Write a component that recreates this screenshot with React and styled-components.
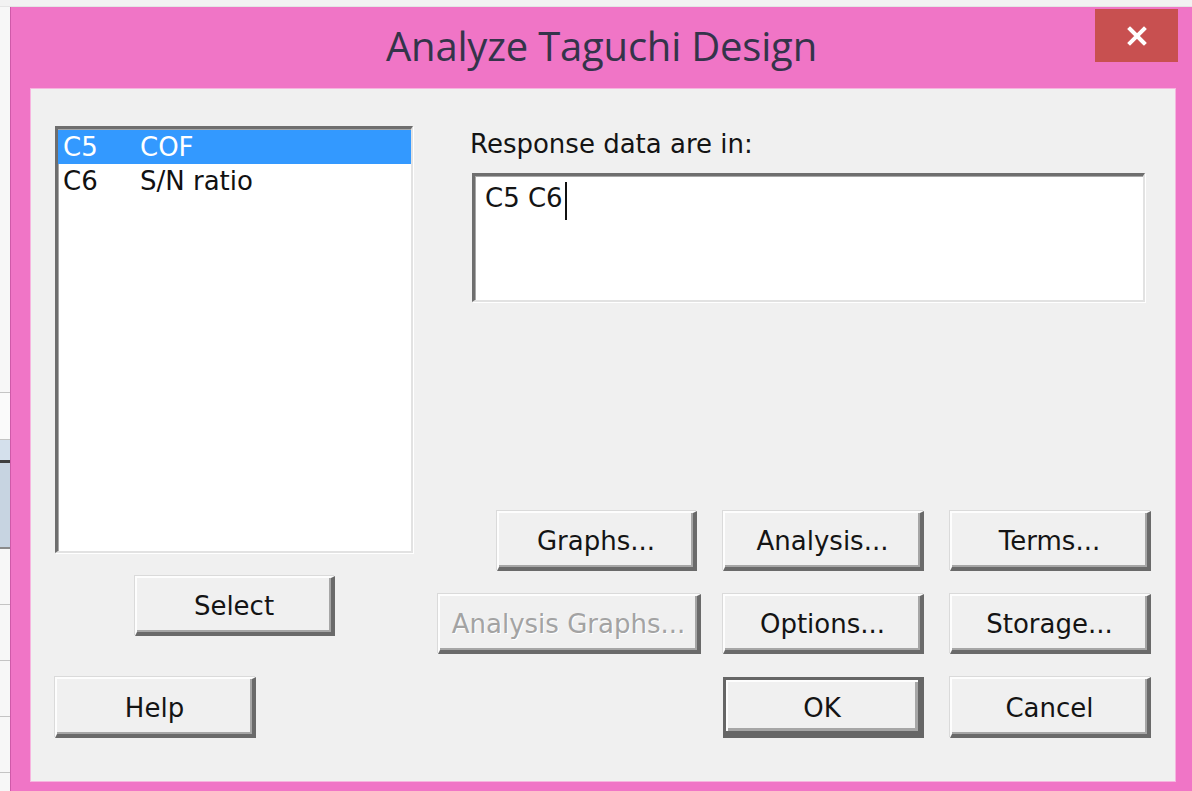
import React from "react";
import styled, { createGlobalStyle, css } from "styled-components";

const GlobalStyle = createGlobalStyle`
  html, body {
    margin: 0;
    padding: 0;
    background: #f4f4f4;
    overflow: hidden;
  }
  * {
    box-sizing: border-box;
  }
`;

const uiFont = `"DejaVu Sans", "Liberation Sans", sans-serif`;

const Desktop = styled.div`
  display: flex;
  flex-direction: column;
  width: 1192px;
  height: 791px;
`;

const TopBand = styled.div`
  height: 7px;
  background: #f2f2f2;
  border-bottom: 1px solid #e4e4e4;
`;

const Stage = styled.div`
  display: flex;
  flex: 1;
  min-height: 0;
`;

// strip of the worksheet showing behind the dialog
const SheetEdge = styled.div`
  width: 10px;
  display: flex;
  flex-direction: column;
  background: #f7f7f7;
`;

const SheetCell = styled.div`
  height: ${(p) => p.$h}px;
  flex: none;
  background: ${(p) => p.$bg || "#f7f7f7"};
  border-bottom: ${(p) => p.$line || "1px solid #c4c4c4"};
`;

const Window = styled.div`
  flex: 1;
  display: flex;
  flex-direction: column;
  background: #f075c6;
  border-left: 1px solid #cf5aa9;
`;

const TitleBar = styled.div`
  position: relative;
  height: 81px;
  flex: none;
  display: flex;
  align-items: center;
  justify-content: center;
`;

const Title = styled.h1`
  margin: 0 0 4px 0;
  font-family: "Open Sans", "Noto Sans", sans-serif;
  font-weight: 400;
  font-size: 40px;
  color: #34344a;
  letter-spacing: -0.2px;
`;

const CloseButton = styled.div`
  position: absolute;
  top: 2px;
  right: 14px;
  width: 83px;
  height: 53px;
  background: #c85050;
  display: flex;
  align-items: center;
  justify-content: center;
`;

const Frame = styled.div`
  flex: 1;
  display: flex;
  padding: 0 16px 9px 19px;
  min-height: 0;
`;

const Client = styled.div`
  flex: 1;
  display: flex;
  background: #f0f0f0;
  border: 1px solid #f7b4df;
  padding: 37px 24px 43px 24px;
`;

const LeftColumn = styled.div`
  width: 358px;
  display: flex;
  flex-direction: column;
  align-items: flex-start;
`;

const RightColumn = styled.div`
  flex: 1;
  display: flex;
  flex-direction: column;
  margin-left: 26px;
`;

const sunken = css`
  background: #ffffff;
  border-style: solid;
  border-color: #6e6e6e #e2e2e2 #e2e2e2 #6e6e6e;
  border-width: 3px 2px 2px 3px;
  box-shadow: inset 1px 1px 0 #a8a8a8, 1px 1px 0 #ffffff;
`;

const ListBox = styled.div`
  ${sunken};
  width: 358px;
  height: 427px;
  padding-top: 1px;
  font-family: ${uiFont};
  font-size: 26px;
`;

const ListRow = styled.div`
  display: flex;
  height: 34px;
  align-items: center;
  padding-left: 5px;
  background: ${(p) => (p.$selected ? "#3399ff" : "transparent")};
  color: ${(p) => (p.$selected ? "#ffffff" : "#111111")};
`;

const ColName = styled.span`
  width: 77px;
  flex: none;
`;

const Button = styled.div`
  width: ${(p) => p.$w || 200}px;
  height: ${(p) => p.$h || 60}px;
  flex: none;
  display: flex;
  align-items: center;
  justify-content: center;
  background: #f0f0f0;
  font-family: ${uiFont};
  font-size: 26px;
  color: ${(p) => (p.$disabled ? "#a3a3a3" : "#141414")};
  text-shadow: ${(p) => (p.$disabled ? "1px 1px 0 #ffffff" : "none")};
  border-style: solid;
  border-color: #fdfdfd #6a6a6a #6a6a6a #fdfdfd;
  border-width: 2px 4px 4px 2px;
  box-shadow: inset -2px -2px 0 #a6a6a6, -1px -1px 0 #dadada;
  padding-top: 2px;

  ${(p) =>
    p.$default &&
    css`
      border-color: #666666;
      border-width: 3px 6px 7px 3px;
      box-shadow: inset 2px 2px 0 #fdfdfd, inset -3px -3px 0 #a6a6a6;
      padding-top: 4px;
    `}
`;

const SelectButton = styled(Button)`
  margin: 23px 0 0 80px;
`;

const HelpButton = styled(Button)`
  margin-top: 41px;
`;

const FieldLabel = styled.div`
  height: 47px;
  padding: 3px 0 0 31px;
  font-family: ${uiFont};
  font-size: 26px;
  color: #141414;
`;

const ResponseBox = styled.div`
  ${sunken};
  margin-left: 33px;
  width: 673px;
  height: 129px;
  padding: 7px 0 0 10px;
  font-family: ${uiFont};
  font-size: 26px;
  color: #141414;
  display: flex;
  align-items: flex-start;
`;

const Caret = styled.span`
  display: inline-block;
  width: 2px;
  height: 38px;
  margin: -1px 0 0 2px;
  background: #111111;
`;

const ButtonGrid = styled.div`
  margin-top: auto;
  align-self: flex-end;
  display: grid;
  grid-template-columns: 200px 201px 201px;
  column-gap: 26px;
  row-gap: 23px;
  justify-items: end;
`;

const WideButton = styled(Button)`
  margin-right: -4px;
`;

export default function App() {
  const columns = [
    { id: "C5", name: "COF" },
    { id: "C6", name: "S/N ratio" },
  ];

  return (
    <>
      <GlobalStyle />
      <Desktop>
        <TopBand />
        <Stage>
          <SheetEdge>
            <SheetCell $h={386} />
            <SheetCell $h={47} $bg="#fafafa" />
            <SheetCell $h={23} $bg="#d4e0ec" $line="3px solid #3e3e3e" />
            <SheetCell $h={86} $bg="#c7d4e1" $line="2px solid #8a8a8a" />
            <SheetCell $h={56} />
            <SheetCell $h={56} />
            <SheetCell $h={56} />
            <SheetCell $h={56} />
          </SheetEdge>
          <Window>
            <TitleBar>
              <Title>Analyze Taguchi Design</Title>
              <CloseButton>
                <svg width="22" height="22" viewBox="0 0 22 22">
                  <path
                    d="M4 4 L18 18 M18 4 L4 18"
                    stroke="#ffffff"
                    strokeWidth="4"
                    strokeLinecap="square"
                  />
                </svg>
              </CloseButton>
            </TitleBar>
            <Frame>
              <Client>
                <LeftColumn>
                  <ListBox>
                    {columns.map((c, i) => (
                      <ListRow key={c.id} $selected={i === 0}>
                        <ColName>{c.id}</ColName>
                        <span>{c.name}</span>
                      </ListRow>
                    ))}
                  </ListBox>
                  <SelectButton>Select</SelectButton>
                  <HelpButton $w={201} $h={61}>
                    Help
                  </HelpButton>
                </LeftColumn>
                <RightColumn>
                  <FieldLabel>Response data are in:</FieldLabel>
                  <ResponseBox>
                    C5 C6
                    <Caret />
                  </ResponseBox>
                  <ButtonGrid>
                    <Button>Graphs...</Button>
                    <Button $w={201}>Analysis...</Button>
                    <Button $w={201}>Terms...</Button>
                    <WideButton $w={263} $disabled>
                      Analysis Graphs...
                    </WideButton>
                    <Button $w={201}>Options...</Button>
                    <Button $w={201}>Storage...</Button>
                    <span />
                    <Button $w={201} $h={61} $default>
                      OK
                    </Button>
                    <Button $w={201} $h={61}>
                      Cancel
                    </Button>
                  </ButtonGrid>
                </RightColumn>
              </Client>
            </Frame>
          </Window>
        </Stage>
      </Desktop>
    </>
  );
}
